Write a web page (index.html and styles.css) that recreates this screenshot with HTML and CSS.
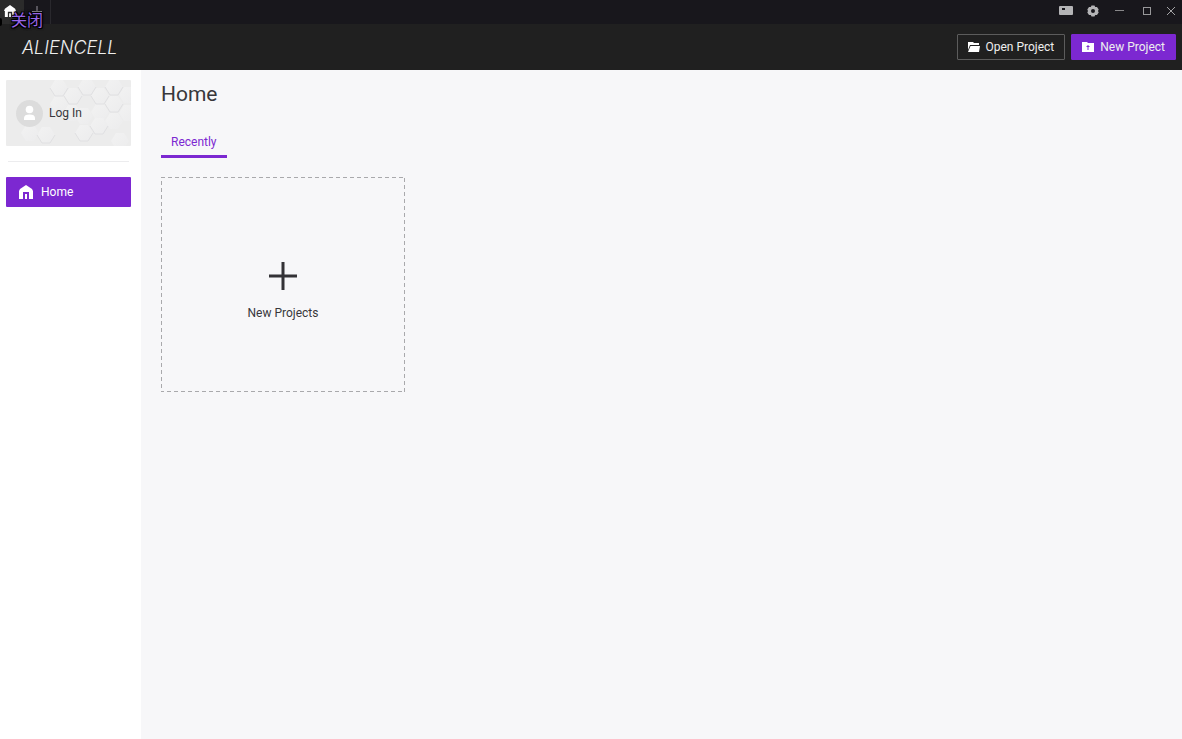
FILE: index.html
```html
<!DOCTYPE html>
<html lang="en">
<head>
    <meta charset="UTF-8">
    <meta name="viewport" content="width=device-width, initial-scale=1.0">
    <title>Aliencell</title>
    <link rel="stylesheet" href="styles.css">
</head>
<body>

<div class="titlebar">
    <div class="tabs">
        <button class="tab active" aria-label="Home tab">
            <svg width="12" height="12" viewBox="0 0 14 14"><path fill="#fff" fill-rule="evenodd" d="M7 0L13 4.5L14 7H13V14H9.5V8H4.5V14H1V7H0L1 4.5ZM6 9.5H8V14H6Z"/></svg>
        </button>
        <button class="tab" aria-label="New tab">
            <svg width="10" height="10" viewBox="0 0 10 10"><path stroke="#96939c" d="M5 0V10M0 5.5H10"/></svg>
        </button>
        <span class="tooltip" lang="zh">关闭</span>
    </div>
    <div class="window-controls">
        <button aria-label="Messages">
            <svg width="14" height="10" viewBox="0 0 14 10"><rect width="14" height="9" rx="1" fill="#b4b4b6"/><path fill="#18171c" d="M3 2H6V4H3Z"/></svg>
        </button>
        <button aria-label="Settings">
            <svg width="12" height="12" viewBox="0 0 12 12"><path fill="#b4b4b6" fill-rule="evenodd" d="M4.5 0.5H7.5L8.2 2L10 1.9L11.7 4.6L11 6L11.7 7.4L10 10.1L8.2 10L7.5 11.5H4.5L3.8 10L2 10.1L0.3 7.4L1 6L0.3 4.6L2 1.9L3.8 2ZM6 4A2 2 0 1 0 6 8A2 2 0 1 0 6 4Z"/></svg>
        </button>
        <button aria-label="Minimize">
            <svg width="10" height="10" viewBox="0 0 10 10"><path stroke="#88888a" d="M0 4.5H9"/></svg>
        </button>
        <button aria-label="Maximize">
            <svg width="10" height="10" viewBox="0 0 10 10"><rect x="1.5" y="1.5" width="7" height="7" fill="none" stroke="#98989a"/></svg>
        </button>
        <button aria-label="Close">
            <svg width="10" height="10" viewBox="0 0 10 10"><path stroke="#a4a4a6" d="M1 1L9 9M9 1L1 9"/></svg>
        </button>
    </div>
</div>

<header>
    <div class="logo">ALIENCELL</div>
    <div class="actions">
        <button class="btn">
            <svg width="12" height="12" viewBox="0 0 12 12"><path fill="#fff" d="M0 1H5L6 2H11V4H2L0 9ZM2.500 5H12L11 11H0Z"/></svg>
            Open Project
        </button>
        <button class="btn primary">
            <svg width="12" height="12" viewBox="0 0 12 12"><path fill="#fff" d="M0 1H5L6 2H12V11H0Z"/><path fill="#7c28d1" d="M6 4L8 6H6.500V9H5.500V6H4Z"/></svg>
            New Project
        </button>
    </div>
</header>

<div class="layout">
    <aside>
        <button class="login">
            <svg class="pattern" width="125" height="66" viewBox="0 0 125 66" aria-hidden="true">
                <defs>
                    <linearGradient id="facet" x1="0" y1="0" x2="1" y2="1">
                        <stop offset="0" stop-color="#f2f2f2"/>
                        <stop offset="1" stop-color="#ececed"/>
                    </linearGradient>
                    <path id="hex" d="M-4 -8H4L9 0L4 8H-4L-9 0Z"/>
                    <path id="edge" d="M9 0L4 8H-4L-9 0"/>
                </defs>
                <g fill="url(#facet)">
                    <use href="#hex" x="53" y="8"/>
                    <use href="#hex" x="67" y="16"/>
                    <use href="#hex" x="53" y="24"/>
                    <use href="#hex" x="81" y="7"/>
                    <use href="#hex" x="66" y="33"/>
                    <use href="#hex" x="108" y="7"/>
                    <use href="#hex" x="94" y="16"/>
                    <use href="#hex" x="108" y="24"/>
                    <use href="#hex" x="122" y="15"/>
                    <use href="#hex" x="94" y="32"/>
                    <use href="#hex" x="122" y="33"/>
                    <use href="#hex" x="78" y="36"/>
                    <use href="#hex" x="93" y="46"/>
                    <use href="#hex" x="108" y="41"/>
                    <use href="#hex" x="78" y="53"/>
                    <use href="#hex" x="40" y="55"/>
                    <use href="#hex" x="24" y="53"/>
                    <use href="#hex" x="114" y="61"/>
                </g>
                <g fill="none" stroke="#e0e0e2">
                    <use href="#edge" x="53" y="8"/>
                    <use href="#edge" x="67" y="16"/>
                    <use href="#edge" x="81" y="7"/>
                    <use href="#edge" x="108" y="7"/>
                    <use href="#edge" x="94" y="16"/>
                    <use href="#edge" x="108" y="24"/>
                    <use href="#edge" x="93" y="46"/>
                    <use href="#edge" x="78" y="53"/>
                    <use href="#edge" x="40" y="55"/>
                </g>
            </svg>
            <svg class="avatar" width="27" height="27" viewBox="0 0 27 27"><circle cx="13.500" cy="13.500" r="13.500" fill="#dcdcdc"/><circle cx="13.500" cy="9.500" r="3.800" fill="#fff"/><path fill="#fff" d="M8 20V18C8 15.500 10 14.500 13.500 14.500S19 15.500 19 18V20Z"/></svg>
            <span>Log In</span>
        </button>
        <hr>
        <nav>
            <a class="nav-item" href="#">
                <svg width="14" height="14" viewBox="0 0 14 14"><path fill="#fff" fill-rule="evenodd" d="M7 0L13 4L14 6V14H10V7H4V14H0V6L1 4ZM6 9H8V14H6Z"/></svg>
                Home
            </a>
        </nav>
    </aside>

    <main>
        <h1>Home</h1>
        <div class="filter">
            <button class="filter-item">Recently</button>
        </div>
        <div class="projects">
            <button class="new-card">
                <svg class="card-border" width="100%" height="100%" aria-hidden="true"><rect width="100%" height="100%"/></svg>
                <svg width="28" height="28" viewBox="0 0 28 28"><path stroke="#333236" stroke-width="3" d="M14 0V28M0 14H28"/></svg>
                <span>New Projects</span>
            </button>
        </div>
    </main>
</div>

</body>
</html>
```
FILE: styles.css
```css
* {
    box-sizing: border-box;
}
body {
    margin: 0;
    min-height: 100vh;
    display: flex;
    flex-direction: column;
    font-family: Roboto, "Liberation Sans", sans-serif;
    font-size: 12px;
    color: #38373b;
    background-color: #f7f7f9;
}
button {
    font: inherit;
    color: inherit;
    background: none;
    border: none;
    padding: 0;
    cursor: pointer;
}
svg {
    display: block;
    flex-shrink: 0;
}

/* Title bar */
.titlebar {
    display: flex;
    justify-content: space-between;
    height: 24px;
    background-color: #18171c;
}
.tabs {
    position: relative;
    display: flex;
}
.tab {
    display: flex;
    align-items: center;
    justify-content: center;
    width: 27px;
    padding-bottom: 3px;
    border-right: 1px solid #29282d;
}
.tab.active {
    width: 24px;
    padding-right: 5px;
    background-color: #2b2b2b;
    border-right: none;
}
.tooltip {
    position: absolute;
    left: 11px;
    top: 7px;
    font-family: "Noto Sans CJK SC", sans-serif;
    font-size: 16px;
    line-height: 24px;
    white-space: nowrap;
    color: #9865e8;
    text-shadow: 1px 1px 0 #000, -1px -1px 0 #000, 1px -1px 0 #000, -1px 1px 0 #000, 0 0 3px #000, 0 0 3px #000;
}
/* tip of the tooltip, cut by the window edge */
.tooltip::before {
    content: "";
    position: absolute;
    left: -11px;
    top: 11px;
    width: 2px;
    height: 8px;
    border-radius: 0 2px 2px 0;
    background-color: #000;
}
.window-controls {
    display: flex;
}
.window-controls button {
    display: flex;
    align-items: center;
    justify-content: center;
    width: 27px;
    padding-bottom: 3px;
}
.window-controls button:last-child {
    width: 22px;
}

/* Header */
header {
    display: flex;
    align-items: center;
    justify-content: space-between;
    height: 46px;
    padding: 0 6px 0 22px;
    background-color: #202020;
}
.logo {
    font-family: Inter, sans-serif;
    font-size: 18px;
    font-weight: 300;
    font-style: italic;
    color: #eee;
}
.actions {
    display: flex;
    gap: 6px;
}
.btn {
    display: flex;
    align-items: center;
    gap: 6px;
    height: 26px;
    padding: 0 10px;
    border: 1px solid #5c5c5c;
    border-radius: 1px;
    color: #eee;
}
.btn.primary {
    background-color: #7c28d1;
    border-color: #7c28d1;
}

/* Sidebar */
.layout {
    display: flex;
    flex: 1;
}
aside {
    flex: 0 0 141px;
    padding: 10px 10px 10px 6px;
    background-color: #fff;
}
.login {
    position: relative;
    display: flex;
    align-items: center;
    gap: 6px;
    width: 100%;
    height: 66px;
    padding-left: 10px;
    background-color: #ececec;
    border-radius: 1px;
    overflow: hidden;
}
.pattern {
    position: absolute;
    right: 0;
    top: 0;
}
.avatar,
.login span {
    position: relative;
}
hr {
    margin: 15px 2px;
    border: none;
    border-top: 1px solid #ececee;
}
.nav-item {
    display: flex;
    align-items: center;
    gap: 8px;
    height: 30px;
    padding-left: 13px;
    border-radius: 1px;
    background-color: #7c28d1;
    color: #fff;
    text-decoration: none;
}

/* Main */
main {
    flex: 1;
    padding: 10px 20px;
}
h1 {
    margin: 0;
    font-size: 21px;
    font-weight: 400;
    line-height: 28px;
}
.filter {
    display: flex;
    margin-top: 20px;
}
.filter-item {
    height: 30px;
    padding: 0 10px;
    border-bottom: 3px solid #7c28d1;
    color: #7c28d1;
}
.projects {
    display: grid;
    grid-template-columns: repeat(auto-fill, 244px);
    gap: 20px;
    margin-top: 19px;
}
.new-card {
    position: relative;
    display: flex;
    flex-direction: column;
    align-items: center;
    justify-content: center;
    gap: 16px;
    height: 215px;
    padding-top: 12px;
}
.card-border {
    position: absolute;
    left: 0;
    top: 0;
    fill: none;
    stroke: #a9a9ac;
    stroke-width: 2;
    stroke-dasharray: 4 3;
}
```
